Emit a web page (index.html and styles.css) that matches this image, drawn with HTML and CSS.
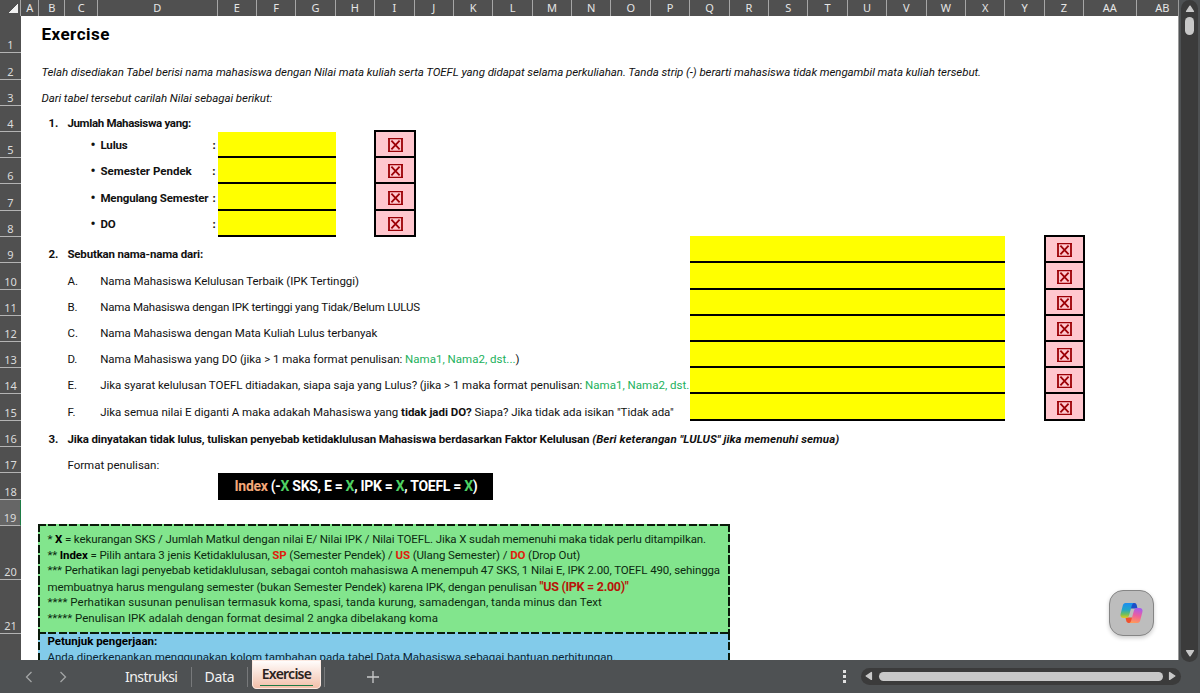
FILE: index.html
```
<!DOCTYPE html>
<html lang="id">
<head>
    <meta charset="UTF-8">
    <meta name="viewport" content="width=device-width, initial-scale=1.0">
    <title>Exercise</title>
    <link rel="stylesheet" href="styles.css">
</head>
<body>
    <svg class="symbols" width="0" height="0">
        <symbol id="cross" viewBox="0 0 15 14">
            <path d="M1 0v14M14 0v14" stroke="#9c0006" stroke-width="1.8"/>
            <path d="M0 .6h15M0 13.4h15" stroke="#9c0006" stroke-width="1.2"/>
            <path d="M3.4 2.6l8.2 8.8M11.6 2.6l-8.2 8.8" stroke="#9c0006" stroke-width="1.8"/>
        </symbol>
    </svg>

    <div class="workspace">
        <div class="sheet">
            <div class="row columns">
                <span class="corner"></span>
                <span>A</span><span>B</span><span>C</span><span>D</span><span>E</span><span>F</span><span>G</span>
                <span>H</span><span>I</span><span>J</span><span>K</span><span>L</span><span>M</span><span>N</span>
                <span>O</span><span>P</span><span>Q</span><span>R</span><span>S</span><span>T</span><span>U</span>
                <span>V</span><span>W</span><span>X</span><span>Y</span><span>Z</span><span>AA</span><span>AB</span>
            </div>

            <div class="row h37"><span class="num">1</span><h1 class="from-b">Exercise</h1></div>
            <div class="row h27"><span class="num">2</span><p class="from-b intro">Telah disediakan Tabel berisi nama mahasiswa dengan Nilai mata kuliah serta TOEFL yang didapat selama perkuliahan. Tanda strip (-) berarti mahasiswa tidak mengambil mata kuliah tersebut.</p></div>
            <div class="row"><span class="num">3</span><p class="from-b intro">Dari tabel tersebut carilah Nilai sebagai berikut:</p></div>

            <!-- 1. Jumlah -->
            <div class="row raised"><span class="num">4</span><b class="no">1.</b><b class="from-c tight">Jumlah Mahasiswa yang:</b></div>
            <div class="row"><span class="num">5</span><b class="bullet"><span>•</span>Lulus<i>:</i></b><span class="answer short"></span><span class="check col-i first"><svg><use href="#cross"/></svg></span></div>
            <div class="row"><span class="num">6</span><b class="bullet wide"><span>•</span>Semester Pendek<i>:</i></b><span class="answer short"></span><span class="check col-i"><svg><use href="#cross"/></svg></span></div>
            <div class="row h27"><span class="num">7</span><b class="bullet"><span>•</span>Mengulang Semester<i>:</i></b><span class="answer short"></span><span class="check col-i"><svg><use href="#cross"/></svg></span></div>
            <div class="row"><span class="num">8</span><b class="bullet"><span>•</span>DO<i>:</i></b><span class="answer short"></span><span class="check col-i"><svg><use href="#cross"/></svg></span></div>

            <!-- 2. Nama-nama -->
            <div class="row raised"><span class="num">9</span><b class="no">2.</b><b class="from-c names">Sebutkan nama-nama dari:</b><span class="answer long first"></span><span class="check col-z first"><svg><use href="#cross"/></svg></span></div>
            <div class="row h27 raised"><span class="num">10</span><span class="letter">A.</span><p class="question">Nama Mahasiswa Kelulusan Terbaik (IPK Tertinggi)</p><span class="answer long"></span><span class="check col-z"><svg><use href="#cross"/></svg></span></div>
            <div class="row raised"><span class="num">11</span><span class="letter">B.</span><p class="question q-b">Nama Mahasiswa dengan IPK tertinggi yang Tidak/Belum LULUS</p><span class="answer long"></span><span class="check col-z"><svg><use href="#cross"/></svg></span></div>
            <div class="row raised"><span class="num">12</span><span class="letter">C.</span><p class="question">Nama Mahasiswa dengan Mata Kuliah Lulus terbanyak</p><span class="answer long"></span><span class="check col-z"><svg><use href="#cross"/></svg></span></div>
            <div class="row raised"><span class="num">13</span><span class="letter">D.</span><p class="question q-d">Nama Mahasiswa yang DO (jika &gt; 1 maka format penulisan: <span class="sample">Nama1, Nama2, dst...</span>)</p><span class="answer long"></span><span class="check col-z"><svg><use href="#cross"/></svg></span></div>
            <div class="row raised"><span class="num">14</span><span class="letter">E.</span><p class="question q-d">Jika syarat kelulusan TOEFL ditiadakan, siapa saja yang Lulus? (jika &gt; 1 maka format penulisan: <span class="sample">Nama1, Nama2, dst.</span></p><span class="answer long"></span><span class="check col-z"><svg><use href="#cross"/></svg></span></div>
            <div class="row h27 raised"><span class="num">15</span><span class="letter">F.</span><p class="question q-f">Jika semua nilai E diganti A maka adakah Mahasiswa yang <b>tidak jadi DO?</b> Siapa? Jika tidak ada isikan "Tidak ada"</p><span class="answer long"></span><span class="check col-z"><svg><use href="#cross"/></svg></span></div>

            <!-- 3. Penyebab -->
            <div class="row"><span class="num">16</span><b class="no">3.</b><b class="from-c reason">Jika dinyatakan tidak lulus, tuliskan penyebab ketidaklulusan Mahasiswa berdasarkan Faktor Kelulusan <i>(Beri keterangan "LULUS" jika memenuhi semua)</i></b></div>
            <div class="row"><span class="num">17</span><span class="from-c">Format penulisan:</span></div>
            <div class="row h27"><span class="num">18</span><div class="format"><span class="index">Index</span> (-<em>X</em> SKS, E = <em>X</em>, IPK = <em>X</em>, TOEFL = <em>X</em>)</div></div>
            <div class="row"><span class="num active">19</span></div>

            <div class="row notes">
                <span class="num">20</span>
                <span class="num">21</span>
                <span class="num"></span>
                <div class="note green">
                    <p class="n1">* <b>X</b> = kekurangan SKS / Jumlah Matkul dengan nilai E/ Nilai IPK / Nilai TOEFL. Jika X sudah memenuhi maka tidak perlu ditampilkan.</p>
                    <p class="n2">** <b>Index</b> = Pilih antara 3 jenis Ketidaklulusan, <strong>SP</strong> (Semester Pendek) / <strong>US</strong> (Ulang Semester) / <strong>DO</strong> (Drop Out)</p>
                    <p class="n3">*** Perhatikan lagi penyebab ketidaklulusan, sebagai contoh mahasiswa A menempuh 47 SKS, 1 Nilai E, IPK 2.00, TOEFL 490, sehingga</p>
                    <p class="n4">membuatnya harus mengulang semester (bukan Semester Pendek) karena IPK, dengan penulisan <strong class="quote">"US (IPK = 2.00)"</strong></p>
                    <p class="n5">**** Perhatikan susunan penulisan termasuk koma, spasi, tanda kurung, samadengan, tanda minus dan Text</p>
                    <p class="n6">***** Penulisan IPK adalah dengan format desimal 2 angka dibelakang koma</p>
                </div>
                <div class="note blue">
                    <p><b>Petunjuk pengerjaan:</b></p>
                    <p>Anda diperkenankan menggunakan kolom tambahan pada tabel Data Mahasiswa sebagai bantuan perhitungan.</p>
                </div>
            </div>
        </div>

        <div class="vscroll">
            <svg width="10" height="8"><path d="M5 1.2L8.4 6.4H1.6z" fill="#c8c8c8" stroke="#c8c8c8" stroke-width="1.4" stroke-linejoin="round"/></svg>
            <span class="thumb"></span>
            <svg width="10" height="8"><path d="M5 6.8L8.4 1.6H1.6z" fill="#c8c8c8" stroke="#c8c8c8" stroke-width="1.4" stroke-linejoin="round"/></svg>
        </div>

        <button class="copilot" aria-label="Copilot">
            <svg width="23" height="22" viewBox="0 0 23 22">
                <defs>
                    <linearGradient id="cool" x1="0" y1="0" x2="0" y2="1">
                        <stop offset="0" stop-color="#1b8df0"/>
                        <stop offset=".45" stop-color="#22a6c8"/>
                        <stop offset=".75" stop-color="#6fbf5c"/>
                        <stop offset="1" stop-color="#e8c81e"/>
                    </linearGradient>
                    <linearGradient id="warm" x1=".6" y1="0" x2=".4" y2="1">
                        <stop offset="0" stop-color="#a55cf0"/>
                        <stop offset=".5" stop-color="#ee5f9c"/>
                        <stop offset="1" stop-color="#ff9a5a"/>
                    </linearGradient>
                </defs>
                <path d="M10 1h4.400c1.300 0 2 .8 2.300 1.900L17.500 6.500H11z" fill="#1c4fc8"/>
                <path d="M13 21H8.600c-1.300 0-2-.8-2.300-1.900L5.500 15.500H12z" fill="#f0512e"/>
                <path d="M5.600 1H14c-1.200.3-1.800 1.200-2.200 2.600L9.200 13c-.6 2-1.300 3-3.200 3H3.400C1 16 0 14.300.6 12L2.800 3.500C3.200 2 4 1 5.600 1z" fill="url(#cool)"/>
                <path d="M17.400 21H9c1.200-.3 1.800-1.200 2.200-2.600L13.800 9c.6-2 1.300-3 3.200-3h2.600c2.400 0 3.400 1.700 2.800 4l-2.200 8.500c-.4 1.500-1.200 2.500-2.800 2.500z" fill="url(#warm)"/>
            </svg>
        </button>
    </div>

    <div class="tabbar">
        <svg class="arrow" width="8" height="12"><path d="M6.500 1L1.500 6l5 5" fill="none" stroke="#a3a5a6" stroke-width="1.3"/></svg>
        <svg class="arrow next" width="8" height="12"><path d="M1.500 1l5 5-5 5" fill="none" stroke="#a3a5a6" stroke-width="1.3"/></svg>
        <span class="tab instruksi">Instruksi</span>
        <span class="tab data">Data</span>
        <span class="tab selected"><u>Exercise</u></span>
        <span class="divider"></span>
        <svg class="plus" width="12" height="12"><path d="M6 0v12M0 6h12" stroke="#c9cacb" stroke-width="1.3"/></svg>
        <span class="dots"><i></i><i></i><i></i></span>
        <div class="hscroll">
            <svg width="8" height="10"><path d="M1.200 5L6.400 1.600v6.800z" fill="#c8c8c8" stroke="#c8c8c8" stroke-width="1.4" stroke-linejoin="round"/></svg>
            <span class="thumb"></span>
            <svg width="8" height="10"><path d="M6.800 5L1.600 1.600v6.800z" fill="#c8c8c8" stroke="#c8c8c8" stroke-width="1.4" stroke-linejoin="round"/></svg>
        </div>
    </div>
</body>
</html>
```
FILE: styles.css
```
* {
    box-sizing: border-box;
}

body {
    margin: 0;
    height: 693px;
    overflow: hidden;
    display: flex;
    flex-direction: column;
    background: #4e5153;
    font-family: Roboto, "Liberation Sans", sans-serif;
    font-size: 11.5px;
    line-height: 16px;
    color: #111;
}

p, h1 {
    margin: 0;
}

.symbols {
    position: absolute;
}

.workspace {
    position: relative;
    display: flex;
    height: 660px;
}

.sheet {
    width: 1179px;
    height: 660px;
    overflow: hidden;
    background: #fff;
    border-right: 1px solid #9a9a9a;
}

/* every row shares the same column widths, A to AB */
.row {
    display: grid;
    grid-template-columns: 21px 18.4px 26px 32.8px 119.4px repeat(22, 39.4px) 52.4px 41.6px;
    grid-template-rows: 100%;
    height: 26px;
    align-items: end;
    white-space: nowrap;
}

.h27 { height: 27px; }
.h37 { height: 37px; }

.row > * {
    grid-row: 1;
}

.raised > b,
.raised > p,
.raised > .letter {
    margin-bottom: 1px;
}

.columns {
    height: 16px;
    background: #505050;
}

.columns span {
    height: 16px;
    border-right: 1px solid #a6a6a6;
    color: #e6e6e6;
    font: 11px/16px "Noto Sans", sans-serif;
    text-align: center;
}

.columns span:last-child {
    border-right: none;
    padding-left: 10px;
    background: #505050;
}

.columns .corner {
    background: linear-gradient(135deg, transparent 50%, #f0f0f0 50%) 8px 4px / 10px 9px no-repeat;
}

.num {
    grid-column: 1;
    align-self: stretch;
    display: flex;
    align-items: flex-end;
    justify-content: center;
    background: #505050;
    border-bottom: 1px solid #b4b4b4;
    color: #dcdcdc;
    font: 11px/14px "Noto Sans", sans-serif;
}

.num.active {
    background: #666;
    border-right: 1px solid #1e7b45;
}

h1 {
    align-self: center;
    margin-bottom: 2px;
    font-size: 17px;
    line-height: 20px;
    letter-spacing: 0.5px;
    color: #000;
}

.from-b {
    grid-column: 3 / -1;
    padding-left: 2px;
}

.intro {
    font-style: italic;
    letter-spacing: -0.062px;
}

.no {
    grid-column: 3;
    padding-left: 9px;
}

.from-c {
    grid-column: 4 / 18;
    padding-left: 2px;
}

.tight { letter-spacing: -0.32px; }
.names { letter-spacing: -0.17px; }
.reason { letter-spacing: -0.114px; }
.reason i { letter-spacing: 0.08px; }

.bullet {
    grid-column: 4 / 6;
    align-self: center;
    display: flex;
    padding: 0 2px 0 25px;
    letter-spacing: -0.14px;
}

.bullet.wide {
    letter-spacing: 0;
}

.bullet span {
    width: 10px;
    font-size: 14px;
}

.bullet i {
    margin-left: auto;
    font-style: normal;
}

.letter {
    grid-column: 4;
    padding-left: 2px;
}

.question {
    grid-column: 5 / 18;
    padding-left: 2px;
    overflow: hidden;
    letter-spacing: -0.057px;
}

.q-b { letter-spacing: -0.19px; }
.q-d { letter-spacing: -0.035px; }
.q-d .sample { letter-spacing: 0.02px; }
.q-f { letter-spacing: -0.04px; }

.sample {
    color: #22b15c;
}

.answer {
    align-self: stretch;
    background: #ff0;
    border-bottom: 2px solid #000;
}

.answer.first {
    margin-top: -1px;
}

.short { grid-column: 6 / 9; }
.long { grid-column: 18 / 26; }

.check {
    align-self: stretch;
    display: flex;
    align-items: center;
    justify-content: center;
    margin: 0 -1px;
    padding: 2px 0 0 1px;
    background: #ffc7ce;
    border: solid #000;
    border-width: 0 2px 2px;
}

.check.first {
    margin-top: -2px;
    border-top-width: 2px;
}

.check svg {
    width: 15px;
    height: 14px;
}

.col-i { grid-column: 10; }
.col-z { grid-column: 27; }

.format {
    grid-column: 6 / 13;
    align-self: stretch;
    padding-left: 17px;
    background: #000;
    color: #fff;
    font-size: 14px;
    font-weight: 700;
    line-height: 26px;
    letter-spacing: -0.3px;
}

.format em {
    font-style: normal;
    color: #4fd163;
}

.format .index {
    color: #f4a878;
}

.notes {
    grid-template-rows: 54px 54px 26px;
    height: 134px;
}

.notes .num:nth-child(2) { grid-row: 2; }
.notes .num:nth-child(3) { grid-row: 3; border-bottom: none; }

/* dashes are drawn as gradients to keep them long and close together */
.note {
    --h: repeating-linear-gradient(90deg, #0a1a0a 0 8px, transparent 8px 10.5px);
    --v: repeating-linear-gradient(180deg, #0a1a0a 0 8px, transparent 8px 10.5px);
    grid-column: 3 / 19;
    align-self: stretch;
    margin: -2px 0 0 -1px;
    width: 692px;
    padding: 8px 9px 0;
    line-height: 15.6px;
    background: var(--h) 0 0 / 100% 2px no-repeat, var(--v) 0 0 / 2px 100% no-repeat, var(--v) 100% 0 / 2px 100% no-repeat, #82e58d;
}

.green {
    grid-row: 1 / 3;
    color: #0c2a10;
}

.blue {
    grid-row: 3;
    padding-top: 2px;
    background-color: #82cbea;
    color: #0a2433;
}

.note b {
    color: #000;
}

.note strong {
    color: #e0200c;
}

.n1 { letter-spacing: -0.113px; }
.n2 { letter-spacing: -0.1px; }
.n3 { letter-spacing: -0.1px; }
.n4 { line-height: 16.6px; letter-spacing: -0.09px; }
.n5 { letter-spacing: 0.043px; }

.note .quote {
    color: #b81408;
    font-size: 12.5px;
    letter-spacing: -0.29px;
}

.vscroll {
    width: 17px;
    height: 662px;
    margin-left: 2px;
    display: flex;
    flex-direction: column;
    align-items: center;
    padding: 5px 0 5px;
    border-radius: 9px;
    background: #3b3b3b;
}

.vscroll .thumb {
    width: 9px;
    height: 18px;
    margin: 4px 0 auto;
    border-radius: 5px;
    background: #c8c8c8;
}

.copilot {
    position: absolute;
    left: 1109px;
    top: 590px;
    width: 45px;
    height: 46px;
    display: flex;
    align-items: center;
    justify-content: center;
    padding: 0;
    border: 1px solid #858585;
    border-radius: 14px;
    background: #bdbdbd;
    box-shadow: 0 2px 4px rgba(0, 0, 0, 0.2);
}

.tabbar {
    display: flex;
    align-items: center;
    height: 33px;
    padding-left: 25px;
    font-family: "Noto Sans", sans-serif;
    font-size: 14px;
    color: #f2f2f2;
}

.next {
    margin-left: 26px;
}

.tab {
    height: 20px;
    line-height: 20px;
    text-align: center;
    border-right: 1px solid #77797b;
}

.instruksi {
    width: 83px;
    margin-left: 42px;
    padding-left: 16px;
    text-align: left;
    letter-spacing: -0.55px;
}

.data {
    width: 56px;
    letter-spacing: -0.3px;
}

.tab.selected {
    align-self: flex-start;
    width: 69px;
    height: 29px;
    margin-left: 4px;
    padding: 4px 8px 0;
    border: none;
    border-radius: 0 0 5px 5px;
    background: linear-gradient(#fff, #f2bda6);
    box-shadow: inset 0 0 0 1px #fbe9e1;
    color: #2a2220;
    font-size: 14px;
    font-weight: 600;
    letter-spacing: -0.75px;
}

.selected u {
    display: block;
    height: 22px;
    text-decoration: none;
    border-bottom: 1.5px solid #1e7b45;
}

.divider {
    width: 1px;
    height: 20px;
    margin-left: 3px;
    background: #77797b;
}

.plus {
    margin-left: 42px;
}

.dots {
    display: flex;
    flex-direction: column;
    gap: 2px;
    margin-left: 464px;
}

.dots i {
    width: 3px;
    height: 3px;
    background: #e0e0e0;
}

.hscroll {
    display: flex;
    align-items: center;
    justify-content: space-between;
    width: 320px;
    height: 17px;
    margin: -1px 0 0 15px;
    padding: 0 5px 0 4px;
    border-radius: 9px;
    background: #3b3b3b;
}

.hscroll .thumb {
    width: 284px;
    height: 9px;
    border-radius: 5px;
    background: #c8c8c8;
}
```
